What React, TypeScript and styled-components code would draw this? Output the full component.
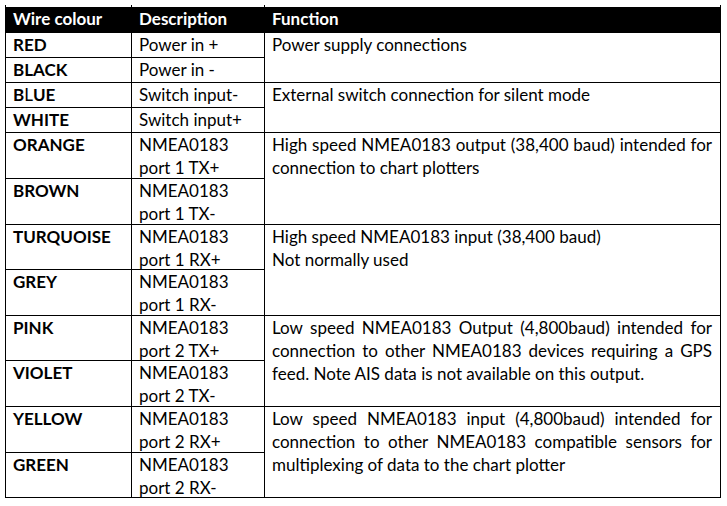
import React from "react";
import styled, { createGlobalStyle } from "styled-components";

const Global = createGlobalStyle`
  html, body { margin: 0; padding: 0; background: #ffffff; }
  body { font-family: Lato, "Open Sans", sans-serif; color: #000; }
`;

const Page = styled.div`
  padding: 5px 0 0 5px;
`;

const Table = styled.table`
  border-collapse: separate;
  border-spacing: 0;
  width: 716px;
  table-layout: fixed;
  font-family: Lato, "Open Sans", sans-serif;
  font-size: 17px;
  line-height: 23px;
`;

const Col = styled.col<{ $w: number }>`
  width: ${(p) => p.$w}px;
`;

const HeadRow = styled.tr`
  height: 28px;
`;

const BodyRow = styled.tr<{ $h: number }>`
  height: ${(p) => p.$h}px;
`;

const HeadCell = styled.th<{ $first?: boolean }>`
  background: linear-gradient(#000, #000) 0 2px / 100% calc(100% - 2px) no-repeat;
  color: #fff;
  font-weight: 700;
  text-align: left;
  vertical-align: top;
  padding: 2px 8px 0 7px;
  line-height: 24px;
  border-right: 1px solid #000;
  border-bottom: 1px solid #000;
  border-left: ${(p) => (p.$first ? "1px solid #000" : "none")};
  box-sizing: border-box;
`;

const Cell = styled.td<{ $first?: boolean; $bold?: boolean }>`
  vertical-align: top;
  padding: 0 8px 0 7px;
  border-right: 1px solid #000;
  border-bottom: 1px solid #000;
  border-left: ${(p) => (p.$first ? "1px solid #000" : "none")};
  font-weight: ${(p) => (p.$bold ? 700 : 400)};
  box-sizing: border-box;
  overflow: visible;
`;

const Line = styled.span<{ $justify?: boolean }>`
  display: block;
  white-space: ${(p) => (p.$justify ? "normal" : "nowrap")};
  text-align: ${(p) => (p.$justify ? "justify" : "left")};
  text-align-last: ${(p) => (p.$justify ? "justify" : "auto")};
  &:last-child {
    margin-bottom: -2px;
  }
`;

const Light = styled.span`
  font-weight: 400;
`;

type Wire = { colour: React.ReactNode; desc: string[] };
type Group = { wires: Wire[]; func: { text: string; justify?: boolean }[]; h: number[] };

const groups: Group[] = [
  {
    wires: [
      { colour: "RED", desc: ["Power in +"] },
      { colour: "BLACK", desc: ["Power in -"] },
    ],
    func: [{ text: "Power supply connections" }],
    h: [25, 25],
  },
  {
    wires: [
      {
        colour: (
          <>
            B<Light>L</Light>UE
          </>
        ),
        desc: ["Switch input-"],
      },
      { colour: "WHITE", desc: ["Switch input+"] },
    ],
    func: [{ text: "External switch connection for silent mode" }],
    h: [25, 25],
  },
  {
    wires: [
      { colour: "ORANGE", desc: ["NMEA0183", "port 1 TX+"] },
      { colour: "BROWN", desc: ["NMEA0183", "port 1 TX-"] },
    ],
    func: [
      { text: "High speed NMEA0183 output (38,400 baud) intended for", justify: true },
      { text: "connection to chart plotters" },
    ],
    h: [46, 46],
  },
  {
    wires: [
      { colour: "TURQUOISE", desc: ["NMEA0183", "port 1 RX+"] },
      { colour: "GREY", desc: ["NMEA0183", "port 1 RX-"] },
    ],
    func: [
      { text: "High speed NMEA0183 input (38,400 baud)" },
      { text: "Not normally used" },
    ],
    h: [45, 46],
  },
  {
    wires: [
      { colour: "PINK", desc: ["NMEA0183", "port 2 TX+"] },
      { colour: "VIOLET", desc: ["NMEA0183", "port 2 TX-"] },
    ],
    func: [
      { text: "Low speed NMEA0183 Output (4,800baud) intended for", justify: true },
      { text: "connection to other NMEA0183 devices requiring a GPS", justify: true },
      { text: "feed. Note AIS data is not available on this output." },
    ],
    h: [45, 46],
  },
  {
    wires: [
      { colour: "YELLOW", desc: ["NMEA0183", "port 2 RX+"] },
      { colour: "GREEN", desc: ["NMEA0183", "port 2 RX-"] },
    ],
    func: [
      { text: "Low speed NMEA0183 input (4,800baud) intended for", justify: true },
      { text: "connection to other NMEA0183 compatible sensors for", justify: true },
      { text: "multiplexing of data to the chart plotter" },
    ],
    h: [46, 45],
  },
];

export default function App() {
  return (
    <Page>
      <Global />
      <Table>
        <colgroup>
          <Col $w={127} />
          <Col $w={133} />
          <Col $w={456} />
        </colgroup>
        <thead>
          <HeadRow>
            <HeadCell $first>Wire colour</HeadCell>
            <HeadCell>Description</HeadCell>
            <HeadCell>Function</HeadCell>
          </HeadRow>
        </thead>
        <tbody>
          {groups.map((g, gi) =>
            g.wires.map((w, wi) => (
              <BodyRow key={`${gi}-${wi}`} $h={g.h[wi]}>
                <Cell $first $bold>
                  {w.colour}
                </Cell>
                <Cell>
                  {w.desc.map((d, i) => (
                    <Line key={i}>{d}</Line>
                  ))}
                </Cell>
                {wi === 0 && (
                  <Cell rowSpan={g.wires.length}>
                    {g.func.map((f, i) => (
                      <Line key={i} $justify={f.justify}>
                        {f.text}
                      </Line>
                    ))}
                  </Cell>
                )}
              </BodyRow>
            ))
          )}
        </tbody>
      </Table>
    </Page>
  );
}
